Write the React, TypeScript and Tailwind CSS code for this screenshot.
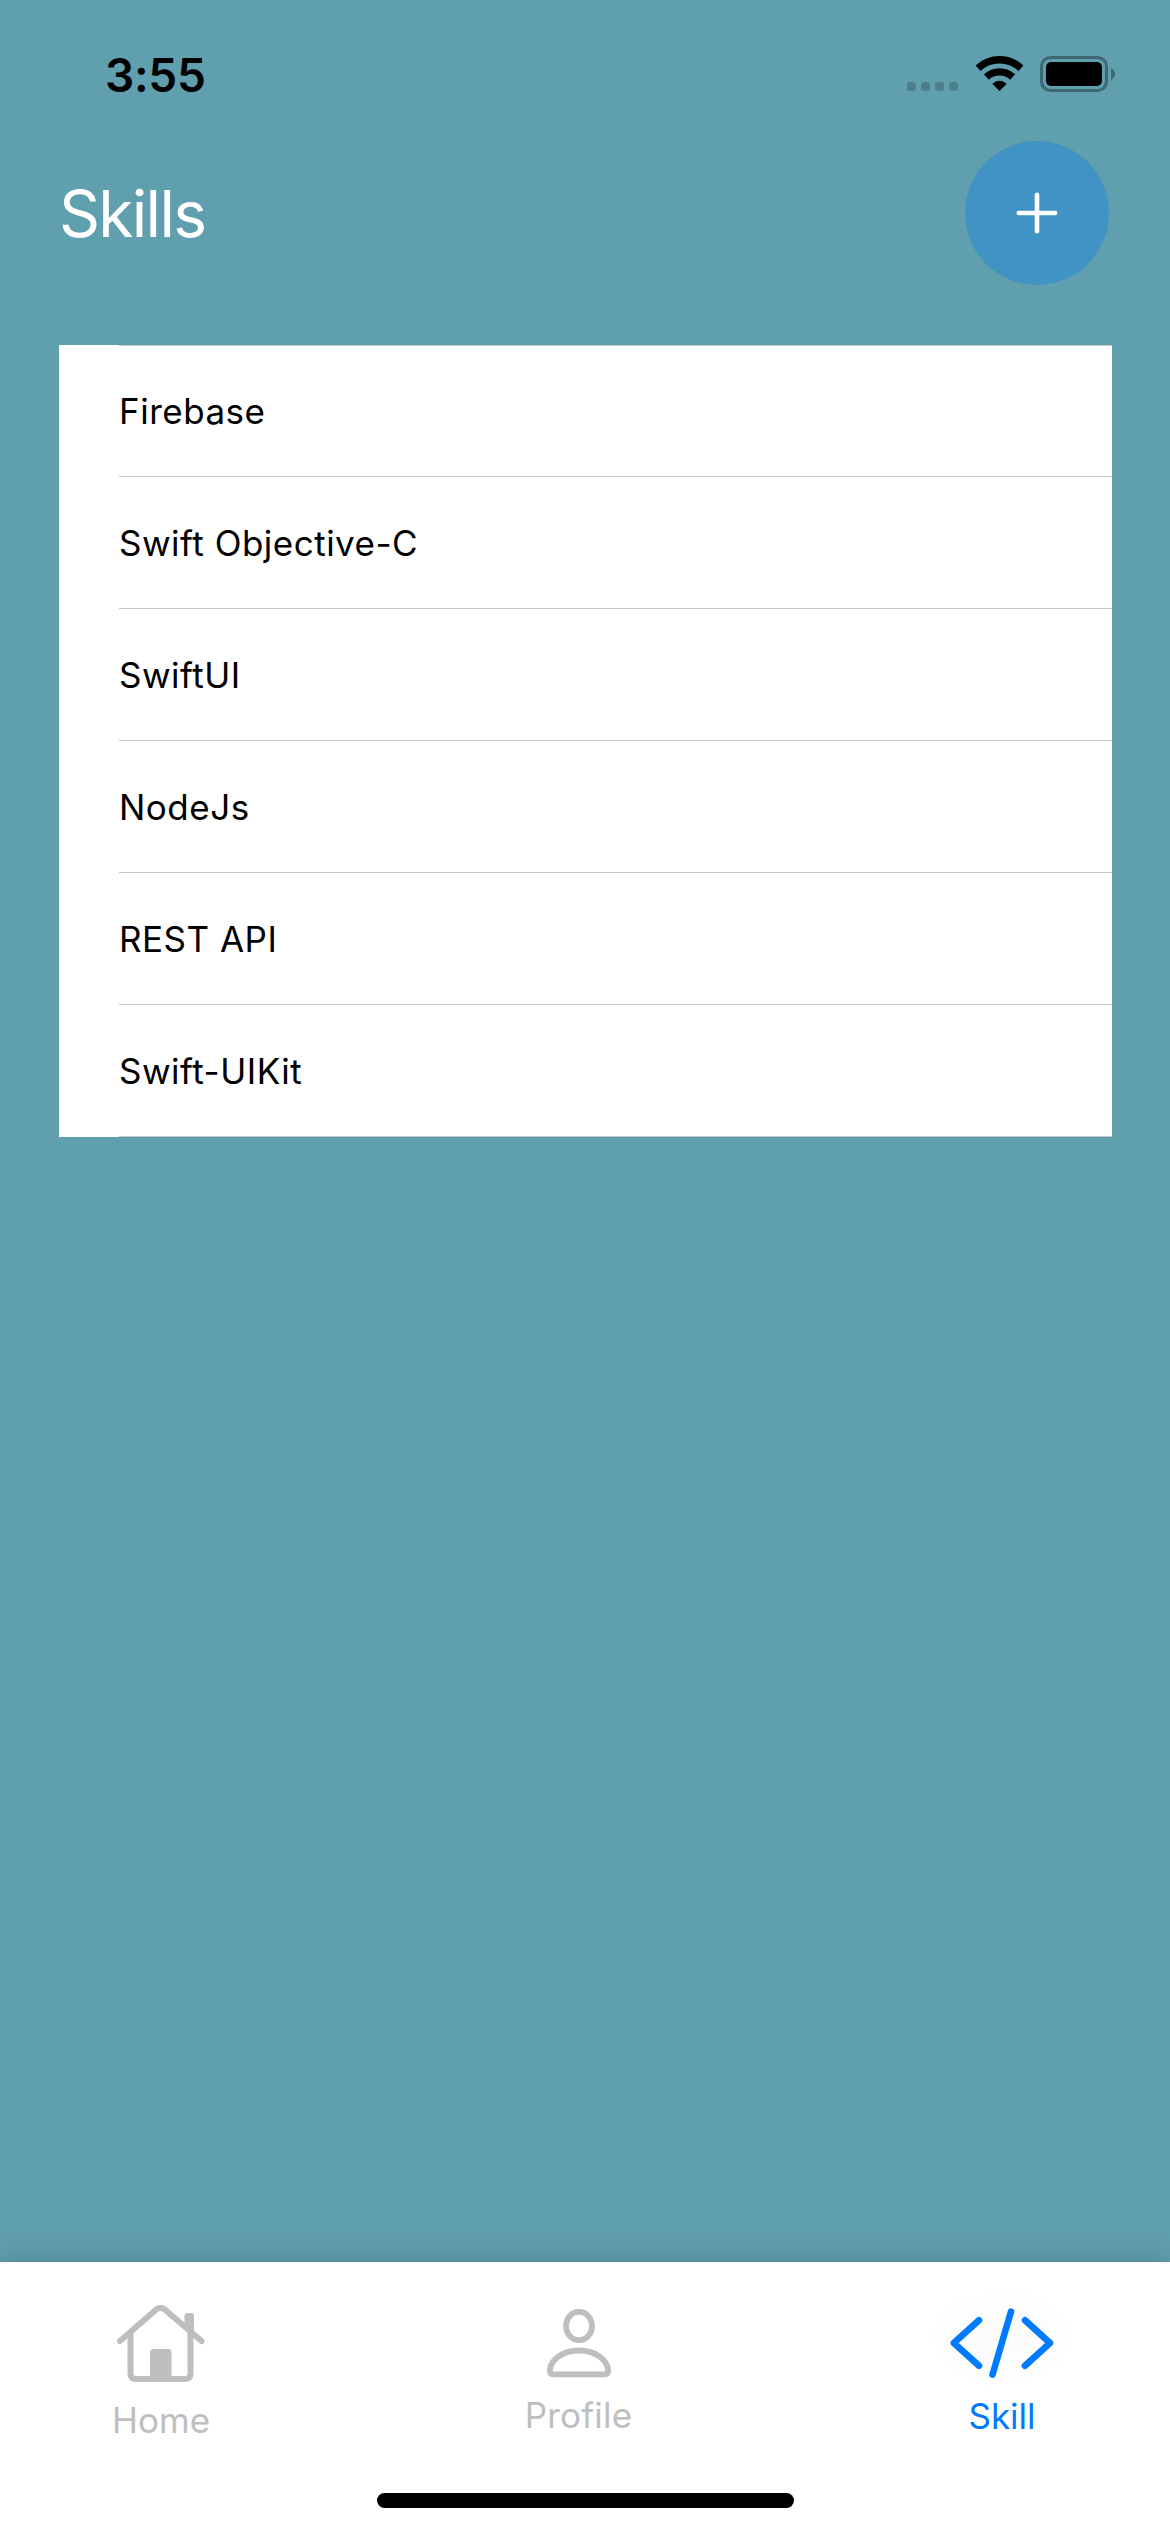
const skills = ["Firebase", "Swift Objective-C", "SwiftUI", "NodeJs", "REST API", "Swift-UIKit"];

function StatusBar() {
  return (
    <div className="flex h-[141px] items-start justify-between pl-[105px] pr-[54px]">
      <div className="mt-[46px] text-[46px] leading-[58px] font-semibold tracking-[-0.3px] text-black">3:55</div>
      <div className="mt-[55px] flex">
        <div className="mt-[27px] mr-[17px] flex gap-[5px]">
          {[0, 1, 2, 3].map((i) => (
            <span key={i} className="size-[9px] rounded-[3px] bg-[#4d7f8b]" />
          ))}
        </div>
        <svg className="mr-[16px] h-[37px] w-[49px]" viewBox="0 0 49 37" fill="none" stroke="#000">
          <path d="M3.1 13.2a31.2 31.2 0 0 1 42.8 0" strokeWidth="7.4" />
          <path d="M11.4 22a19.2 19.2 0 0 1 26.2 0" strokeWidth="7.2" />
          <path d="M24.5 36 17.3 28.7a10.5 10.5 0 0 1 14.4 0Z" fill="#000" stroke="none" />
        </svg>
        <svg className="h-[37px] w-[76px]" viewBox="0 0 76 37">
          <rect x="1.500" y="2.500" width="65" height="33" rx="9" fill="none" stroke="#3f6873" strokeWidth="3" />
          <rect x="6" y="7" width="56" height="24" rx="5" />
          <path d="M71 13.3c5.300 2 5.300 9.400 0 11.400Z" fill="#3f6873" />
        </svg>
      </div>
    </div>
  );
}

function HomeIcon() {
  return (
    <svg className="h-[77px] w-[88px]" viewBox="0 0 88 77" fill="none" stroke="currentColor" strokeLinecap="round" strokeLinejoin="round">
      <path d="M3 36 39.500 4.300Q43.500 1.500 47.500 4.300L84.500 36" strokeWidth="6" />
      <path d="M13.500 29V68.500Q13.500 74 19 74H68Q73.500 74 73.500 68.500V29" strokeWidth="6" />
      <path d="M33 74V47.500Q33 44 36.500 44H51Q54.500 44 54.500 47.500V74Z" fill="currentColor" stroke="none" />
      <path d="M67.500 22V11Q67.500 8 70.500 8H74Q77 8 77 11V30Z" fill="currentColor" stroke="none" />
    </svg>
  );
}

function ProfileIcon() {
  return (
    <svg className="h-[69px] w-[64px]" viewBox="0 0 64 69" fill="none" stroke="currentColor" strokeWidth="5.800">
      <ellipse cx="32" cy="17" rx="13" ry="14.200" />
      <path d="M7 65.300H57Q61.200 65.300 61.200 61.500C60.500 50.500 48 41.500 32 41.500S3.500 50.500 2.800 61.500Q2.800 65.300 7 65.300Z" />
    </svg>
  );
}

function CodeIcon() {
  return (
    <svg className="h-[70px] w-[104px] overflow-visible drop-shadow-[0_-6px_14px_rgba(0,0,0,0.06)]" viewBox="0 0 104 70" fill="none" stroke="currentColor" strokeWidth="6.600" strokeLinecap="round" strokeLinejoin="round">
      <path d="M29 12.200 3.800 35 29 57.700M75 12.200 100 35 75 57.700M61 3.600 42.500 66.600" />
    </svg>
  );
}

export default function App() {
  return (
    <div className="flex h-[2532px] w-[1170px] flex-col overflow-hidden bg-[#609fae] font-['Inter',sans-serif]">
      <StatusBar />
      <header className="flex h-[144px] items-center justify-between pr-[61px] pl-[59px]">
        <h1 className="mt-[2px] text-[64px] leading-[78px] font-normal tracking-[-1.7px] text-white">Skills</h1>
        <button aria-label="Add skill" className="flex size-[144px] items-center justify-center rounded-full bg-[#4193c6]">
          <svg className="mr-[1px] size-[42px]" viewBox="0 0 42 42" stroke="#fff" strokeWidth="4.600" strokeLinecap="round">
            <path d="M21 2.800V39.200M2.800 21H39.200" />
          </svg>
        </button>
      </header>
      <ul className="mt-[60px] mr-[58px] ml-[59px] bg-white pl-[60px]">
        {skills.map((skill, i) => (
          <li
            key={skill}
            className={`flex h-[132px] items-center border-b border-[#c6c6c8] text-[35px] tracking-[0.5px] text-black ${i === 0 ? "border-t" : "pt-[2px]"}`}
          >
            {skill}
          </li>
        ))}
      </ul>
      <nav className="mt-auto flex h-[270px] flex-col items-center bg-white shadow-[0_0_30px_rgba(0,0,0,0.200)]">
        <div className="flex h-[231px] w-full items-start justify-between pr-[116px] pl-[110px] text-[35px] leading-[44px] text-[#bebebe]">
          <div className="mt-[43px] flex w-[102px] flex-col items-center">
            <HomeIcon />
            <span className="mt-[16px]">Home</span>
          </div>
          <div className="mt-[47px] mr-[5px] flex w-[110px] flex-col items-center">
            <ProfileIcon />
            <span className="mt-[15px] tracking-[0.2px]">Profile</span>
          </div>
          <div className="mt-[46px] flex w-[104px] flex-col items-center text-[#007aff]">
            <CodeIcon />
            <span className="mt-[16px]">Skill</span>
          </div>
        </div>
        <div className="h-[15px] w-[417px] rounded-full bg-black" />
      </nav>
    </div>
  );
}
